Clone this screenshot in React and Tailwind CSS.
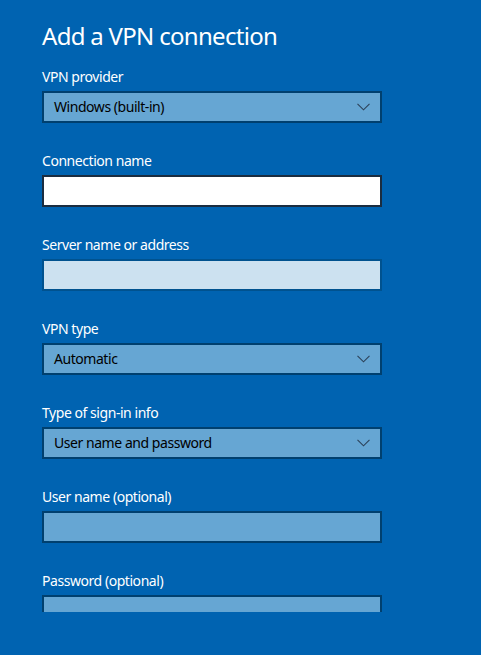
import React from "react";

const font = { fontFamily: '"Noto Sans", "Open Sans", sans-serif' };

function Chevron() {
  return (
    <svg width="13" height="8" viewBox="0 0 13 8" className="shrink-0">
      <path d="M0.5 0.8 L6.5 6.8 L12.5 0.8" fill="none" stroke="#2c4258" strokeWidth="1.1" />
    </svg>
  );
}

function Label({ children }) {
  return <div className="text-[14px] leading-[20px] tracking-[-0.45px] text-white h-[20px] pt-px box-border">{children}</div>;
}

function Select({ value }) {
  return (
    <div className="mt-[5px] h-[32px] w-[340px] border-2 border-[#00406f] bg-[#66a6d3] flex items-center justify-between pl-[10px] pr-[10px]">
      <span className="text-[14px] text-black leading-[20px] tracking-[-0.45px]">{value}</span>
      <Chevron />
    </div>
  );
}

function Input({ variant }) {
  const cls =
    variant === "white"
      ? "border-[#1b2d40] bg-white"
      : variant === "light"
      ? "border-[#00528f] bg-[#cce1f0]"
      : "border-[#00406f] bg-[#66a6d3]";
  return <div className={`mt-[5px] h-[32px] w-[340px] border-2 ${cls}`} />;
}

function Field({ label, children, last }) {
  return (
    <div className={last ? "" : "mb-[27px]"}>
      <Label>{label}</Label>
      {children}
    </div>
  );
}

export default function App() {
  return (
    <div className="w-[481px] h-[655px] bg-[#0063b1]" style={font}>
      <div className="h-[612px] overflow-hidden pl-[42px] pt-[20px]">
        <h1 className="text-[24px] leading-[32px] tracking-[-0.7px] text-white font-normal">Add a VPN connection</h1>
        <div className="mt-[14px]">
          <Field label="VPN provider">
            <Select value="Windows (built-in)" />
          </Field>
          <Field label="Connection name">
            <Input variant="white" />
          </Field>
          <Field label="Server name or address">
            <Input variant="light" />
          </Field>
          <Field label="VPN type">
            <Select value="Automatic" />
          </Field>
          <Field label="Type of sign-in info">
            <Select value="User name and password" />
          </Field>
          <Field label="User name (optional)">
            <Input />
          </Field>
          <Field label="Password (optional)" last>
            <Input />
          </Field>
        </div>
      </div>
    </div>
  );
}
